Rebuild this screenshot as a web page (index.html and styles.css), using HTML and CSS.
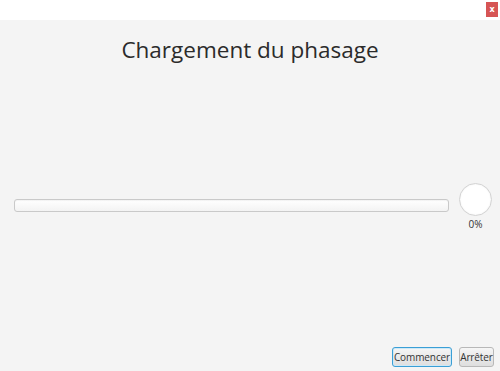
FILE: index.html
```html
<!DOCTYPE html>
<html lang="fr">
<head>
    <meta charset="UTF-8">
    <meta name="viewport" content="width=device-width, initial-scale=1.0">
    <title>Chargement du phasage</title>
    <link rel="stylesheet" href="styles.css">
</head>
<body>

    <div class="fenetre">
        <!-- Barre du haut avec le bouton fermer -->
        <div class="barre-titre">
            <button class="fermer">x</button>
        </div>

        <div class="contenu">
            <h1 class="titre">Chargement du phasage</h1>

            <div class="ligne-progression">
                <div class="barre-progression">
                    <div class="remplissage"></div>
                </div>
                <div class="indicateur">
                    <div class="cercle"></div>
                    <span class="pourcentage">0%</span>
                </div>
            </div>

            <div class="boutons">
                <button class="bouton actif">Commencer</button>
                <button class="bouton">Arrêter</button>
            </div>
        </div>
    </div>

</body>
</html>
```

FILE: styles.css
```css
body {
    margin: 0;
    font-family: "Open Sans", "DejaVu Sans", sans-serif;
    color: #333;
    background-color: #f4f4f4;
}
.fenetre {
    display: flex;
    flex-direction: column;
    width: 500px;
    height: 371px;
}
.barre-titre {
    display: flex;
    justify-content: flex-end;
    align-items: flex-start;
    height: 20px;
    padding: 2px 2px 0 0;
    box-sizing: border-box;
    background-color: #fff;
}
.fermer {
    width: 12px;
    height: 15px;
    padding: 0;
    border: none;
    background-color: #d65454;
    color: #fff;
    font-size: 8px;
    font-weight: bold;
    line-height: 13px;
    font-family: "DejaVu Sans", sans-serif;
}
.contenu {
    flex: 1;
    display: flex;
    flex-direction: column;
    background-color: #f4f4f4;
}
.titre {
    margin: 14px 0 0;
    font-size: 22.5px;
    font-weight: normal;
    line-height: 32px;
    text-align: center;
    color: #2b2b2b;
}
.ligne-progression {
    display: flex;
    align-items: flex-start;
    gap: 10px;
    margin-top: 117px;
    padding: 0 8px 0 14px;
}
.barre-progression {
    flex: 1;
    height: 13px;
    margin-top: 16px;
    box-sizing: border-box;
    border: 1px solid #c9c9c9;
    border-radius: 3px;
    background: linear-gradient(#ffffff, #f3f3f3);
    box-shadow: inset 0 1px 1px rgba(0, 0, 0, 0.05);
}
.remplissage {
    width: 0;
    height: 100%;
}
.indicateur {
    display: flex;
    flex-direction: column;
    align-items: center;
    width: 33px;
}
.cercle {
    width: 33px;
    height: 33px;
    box-sizing: border-box;
    border: 1px solid #d2d2d2;
    border-radius: 50%;
    background-color: #fff;
    box-shadow: inset 0 0 2px rgba(0, 0, 0, 0.08);
}
.pourcentage {
    margin-top: 2px;
    font-size: 10px;
    line-height: 12px;
}
.boutons {
    display: flex;
    justify-content: flex-end;
    gap: 7px;
    margin-top: auto;
    padding: 0 6px 4px 0;
}
.bouton {
    height: 20px;
    padding: 0;
    box-sizing: border-box;
    border: 1px solid #b8b8b8;
    border-radius: 3px;
    background: linear-gradient(#f6f6f6, #dedede);
    color: #333;
    font-family: "Open Sans", "DejaVu Sans", sans-serif;
    font-size: 10px;
    letter-spacing: -0.1px;
    line-height: 17px;
}
.bouton.actif {
    width: 60px;
    border-color: #3a9fd6;
    box-shadow: inset 0 0 0 1px #cde8f6;
}
.bouton + .bouton {
    width: 35px;
}
```
